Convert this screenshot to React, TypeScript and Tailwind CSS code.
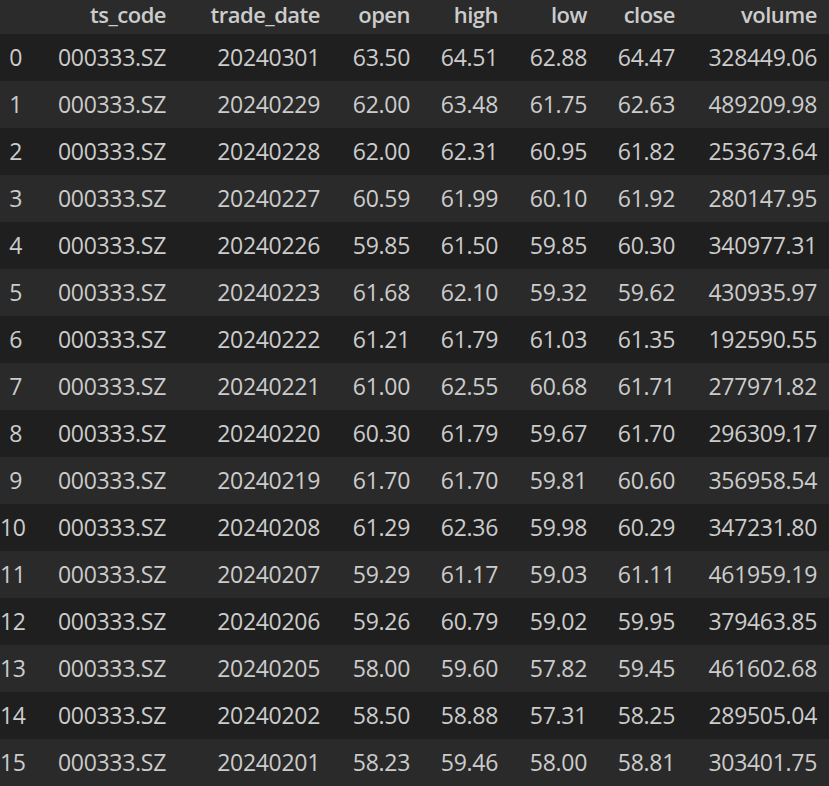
const cols = ["ts_code","trade_date","open","high","low","close","volume"];
const data: string[][] = [
["20240301","63.50","64.51","62.88","64.47","328449.06"],
["20240229","62.00","63.48","61.75","62.63","489209.98"],
["20240228","62.00","62.31","60.95","61.82","253673.64"],
["20240227","60.59","61.99","60.10","61.92","280147.95"],
["20240226","59.85","61.50","59.85","60.30","340977.31"],
["20240223","61.68","62.10","59.32","59.62","430935.97"],
["20240222","61.21","61.79","61.03","61.35","192590.55"],
["20240221","61.00","62.55","60.68","61.71","277971.82"],
["20240220","60.30","61.79","59.67","61.70","296309.17"],
["20240219","61.70","61.70","59.81","60.60","356958.54"],
["20240208","61.29","62.36","59.98","60.29","347231.80"],
["20240207","59.29","61.17","59.03","61.11","461959.19"],
["20240206","59.26","60.79","59.02","59.95","379463.85"],
["20240205","58.00","59.60","57.82","59.45","461602.68"],
["20240202","58.50","58.88","57.31","58.25","289505.04"],
["20240201","58.23","59.46","58.00","58.81","303401.75"],
];
const grid = "grid grid-cols-[22px_144px_154px_90px_88px_89px_88px_142px_12px] items-center";
export default function App() {
  return (
    <div className="w-[829px] h-[786px] overflow-hidden bg-[#2a2a2a] text-[#cccccc] text-[23px] tracking-[-0.3px]" style={{fontFamily:'"Open Sans","Noto Sans",sans-serif'}}>
      <div className={grid + " h-[34px] bg-[#2b2b2b] font-semibold text-[22px] tracking-[-0.5px]"}>
        <div />
        {cols.map(c => <div key={c} className="text-right leading-none pb-[6px]">{c}</div>)}
        <div />
      </div>
      {data.map((r, i) => (
        <div key={i} className={grid + " h-[47px] " + (i % 2 === 0 ? "bg-[#1f1f1f]" : "bg-[#2a2a2a]")}>
          <div className="text-right">{i}</div>
          <div className="text-right">000333.SZ</div>
          {r.map((v, j) => <div key={j} className="text-right">{v}</div>)}
          <div />
        </div>
      ))}
    </div>
  );
}
